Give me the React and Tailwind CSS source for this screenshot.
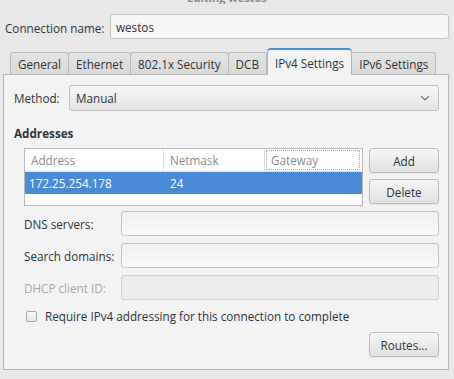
import React from "react";

const FONT = { fontFamily: '"Open Sans", "Noto Sans", sans-serif' };

function Entry({ className = "", disabled = false, children }) {
    return (
        <div
            className={`h-[25px] rounded-[3px] border flex items-center px-[5px] ${
                disabled
                    ? "border-[#d2d2d2] bg-[#ececec]"
                    : "border-[#c4c4c4] bg-gradient-to-b from-[#f0f0f0] to-[#fbfbfb]"
            } ${className}`}
        >
            {children}
        </div>
    );
}

function Button({ label, className = "" }) {
    return (
        <div
            className={`w-[70px] h-[25px] rounded-[3px] border border-[#bcbcbc] bg-gradient-to-b from-[#f6f6f6] to-[#e2e2e2] flex items-center justify-center text-[#2e3436] shadow-[0_1px_0_rgba(0,0,0,0.06)] ${className}`}
        >
            {label}
        </div>
    );
}

function Tab({ label, active }) {
    if (active) {
        return (
            <div className="h-[27px] px-[7px] flex items-center bg-[#f3f3f3] border border-b-0 border-[#b5b5b5] border-t-[#4a90d9] border-t-2 rounded-t-[4px] -mb-px relative z-10 text-[#2e3436]">
                {label}
            </div>
        );
    }
    return (
        <div className="h-[22px] px-[7px] flex items-center bg-gradient-to-b from-[#e4e4e4] to-[#d9d9d9] border border-b-0 border-[#bcbcbc] rounded-t-[3px] -ml-px text-[#2e3436]">
            {label}
        </div>
    );
}

export default function App() {
    const tabs = ["General", "Ethernet", "802.1x Security", "DCB", "IPv4 Settings", "IPv6 Settings"];
    return (
        <div className="w-[454px] h-[379px] bg-[#e8e8e8] text-[11.7px] leading-[16px] text-[#2e3436] overflow-hidden whitespace-nowrap" style={FONT}>
            <div className="h-[4px] overflow-hidden flex justify-center">
                <div className="-mt-[8px] text-[11px] leading-[12px] font-bold text-[#888]">Editing westos</div>
            </div>

            <div className="flex items-center mt-[10px] pl-[5px]">
                <span className="w-[105px] pt-[2px]">Connection name:</span>
                <Entry className="w-[339px] h-[24px] bg-none bg-[#f7f7f7]">westos</Entry>
            </div>

            <div className="flex items-end mt-[9px] pl-[11px] h-[26px]">
                {tabs.map(t => (
                    <Tab key={t} label={t} active={t === "IPv4 Settings"} />
                ))}
            </div>

            <div className="ml-[3px] w-[446px] h-[296px] border border-[#b5b5b5] bg-[#f3f3f3]">
                <div className="flex items-center mt-[10px] ml-[10px]">
                    <span className="w-[55px]">Method:</span>
                    <div className="w-[370px] h-[26px] rounded-[3px] border border-[#c0c0c0] bg-gradient-to-b from-[#f7f7f7] to-[#e4e4e4] flex items-center justify-between pl-[6px] pr-[8px]">
                        <span>Manual</span>
                        <svg width="10" height="6" viewBox="0 0 10 6" fill="none">
                            <path d="M1 1l4 4 4-4" stroke="#777" strokeWidth="1.2" />
                        </svg>
                    </div>
                </div>

                <div className="mt-[14px] ml-[10px] font-bold">Addresses</div>

                <div className="flex mt-[7px] ml-[20px]">
                    <div className="w-[339px] h-[58px] border border-[#b8b8b8] bg-white">
                        <div className="flex h-[23px] items-center text-[#8b8b8b] border-b border-[#e0e0e0]">
                            <div className="w-[139px] pl-[6px] border-r border-[#dedede] h-full flex items-center">Address</div>
                            <div className="w-[101px] pl-[6px] border-r border-[#dedede] h-full flex items-center">Netmask</div>
                            <div className="flex-1 h-[20px] ml-[1px] mr-[2px] pl-[4px] border border-dotted border-[#aaa] flex items-center">Gateway</div>
                        </div>
                        <div className="flex h-[22px] items-center bg-[#4a8ad6] text-white">
                            <div className="w-[139px] pl-[4px]">172.25.254.178</div>
                            <div className="w-[101px] pl-[6px]">24</div>
                        </div>
                    </div>
                    <div className="ml-[6px] flex flex-col gap-[6px]">
                        <Button label="Add" />
                        <Button label="Delete" />
                    </div>
                </div>

                <div className="flex flex-col gap-[7px] mt-[5px] ml-[20px]">
                    <div className="flex items-center">
                        <span className="w-[97px]">DNS servers:</span>
                        <Entry className="w-[318px]" />
                    </div>
                    <div className="flex items-center">
                        <span className="w-[97px]">Search domains:</span>
                        <Entry className="w-[318px]" />
                    </div>
                    <div className="flex items-center">
                        <span className="w-[97px] text-[#a8a8a8]">DHCP client ID:</span>
                        <Entry className="w-[318px]" disabled />
                    </div>
                </div>

                <div className="flex items-center mt-[8px] ml-[22px] h-[16px]">
                    <div className="w-[11px] h-[11px] rounded-[2px] border border-[#a9a9a9] bg-gradient-to-b from-[#fafafa] to-[#e6e6e6]" />
                    <span className="ml-[8px]">Require IPv4 addressing for this connection to complete</span>
                </div>

                <div className="flex justify-end mt-[8px] mr-[9px]">
                    <Button label="Routes..." />
                </div>
            </div>
        </div>
    );
}
